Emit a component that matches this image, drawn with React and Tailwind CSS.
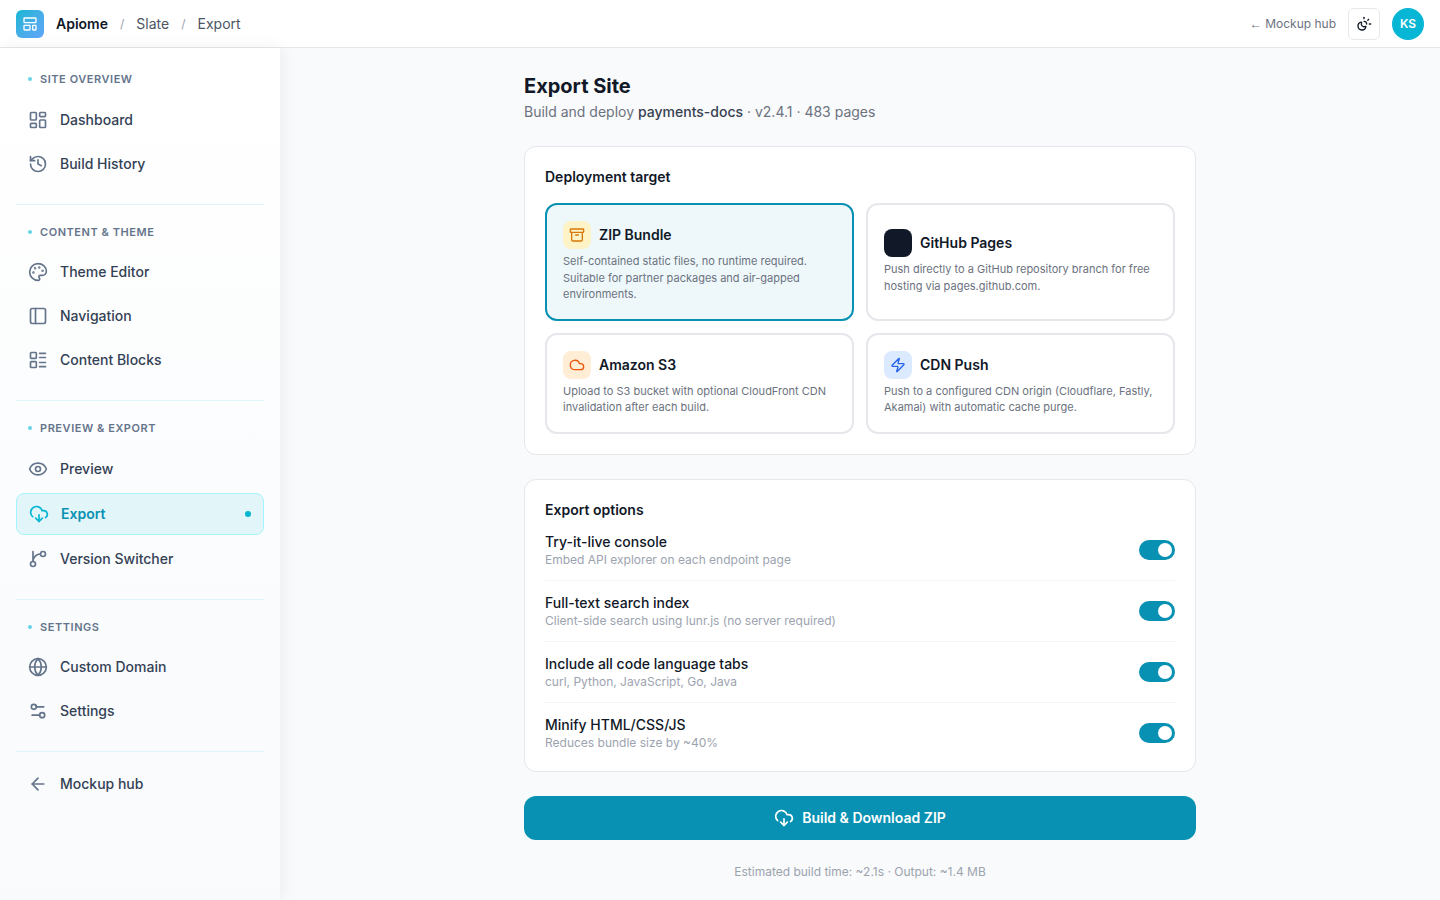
import React, { useState } from 'react';
import {
  Archive,
  ArrowLeft,
  Cloud,
  CloudDownload,
  Eye,
  Globe,
  History,
  LayoutDashboard,
  LayoutList,
  LayoutTemplate,
  Palette,
  PanelLeft,
  Settings2,
  SunMoon,
  Zap
} from 'lucide-react';

// Branch icon with the curve joining above the lower node
const BranchIcon = ({ size = 24, className }) => (
  <svg
    width={size}
    height={size}
    viewBox="0 0 24 24"
    fill="none"
    stroke="currentColor"
    strokeWidth="2"
    strokeLinecap="round"
    strokeLinejoin="round"
    aria-hidden="true"
    className={className}
  >
    <path d="M15 6a9 9 0 0 0-9 9V3" />
    <circle cx="18" cy="6" r="3" />
    <circle cx="6" cy="18" r="3" />
  </svg>
);

const navSections = [
  {
    title: 'Site Overview',
    items: [
      { label: 'Dashboard', icon: LayoutDashboard },
      { label: 'Build History', icon: History }
    ]
  },
  {
    title: 'Content & Theme',
    items: [
      { label: 'Theme Editor', icon: Palette },
      { label: 'Navigation', icon: PanelLeft },
      { label: 'Content Blocks', icon: LayoutList }
    ]
  },
  {
    title: 'Preview & Export',
    items: [
      { label: 'Preview', icon: Eye },
      { label: 'Export', icon: CloudDownload, active: true },
      { label: 'Version Switcher', icon: BranchIcon }
    ]
  },
  {
    title: 'Settings',
    items: [
      { label: 'Custom Domain', icon: Globe },
      { label: 'Settings', icon: Settings2 }
    ]
  }
];

const targets = [
  {
    id: 'zip',
    name: 'ZIP Bundle',
    icon: Archive,
    badge: 'bg-[#fef3c7] text-[#d97706]',
    description: 'Self-contained static files, no runtime required. Suitable for partner packages and air-gapped environments.'
  },
  {
    id: 'github',
    name: 'GitHub Pages',
    icon: null,
    badge: 'bg-[#111827] text-white',
    description: 'Push directly to a GitHub repository branch for free hosting via pages.github.com.'
  },
  {
    id: 's3',
    name: 'Amazon S3',
    icon: Cloud,
    badge: 'bg-[#ffedd5] text-[#ea580c]',
    description: 'Upload to S3 bucket with optional CloudFront CDN invalidation after each build.'
  },
  {
    id: 'cdn',
    name: 'CDN Push',
    icon: Zap,
    badge: 'bg-[#dbeafe] text-[#2563eb]',
    description: 'Push to a configured CDN origin (Cloudflare, Fastly, Akamai) with automatic cache purge.'
  }
];

const exportOptions = [
  { id: 'console', name: 'Try-it-live console', hint: 'Embed API explorer on each endpoint page' },
  { id: 'search', name: 'Full-text search index', hint: 'Client-side search using lunr.js (no server required)' },
  { id: 'tabs', name: 'Include all code language tabs', hint: 'curl, Python, JavaScript, Go, Java' },
  { id: 'minify', name: 'Minify HTML/CSS/JS', hint: 'Reduces bundle size by ~40%' }
];

const Header = () => (
  <header className="flex h-12 items-center justify-between border-b border-[#e5e7eb] bg-white px-4">
    <nav className="flex items-center gap-3 text-sm text-[#4b5563]">
      <span className="flex size-7 items-center justify-center rounded-md bg-linear-to-br from-[#06b6d4] to-[#60a5fa] text-white">
        <LayoutTemplate size={16} />
      </span>
      <a href="#" className="font-semibold text-[#111827]">Apiome</a>
      <span className="text-xs text-[#9ca3af]">/</span>
      <a href="#">Slate</a>
      <span className="text-xs text-[#9ca3af]">/</span>
      <span>Export</span>
    </nav>
    <div className="flex items-center gap-3">
      <a href="#" className="text-xs text-[#6b7280]">
        <span className="font-['Liberation_Sans',sans-serif]">←</span> Mockup hub
      </a>
      <button
        type="button"
        aria-label="Toggle theme"
        className="flex size-8 items-center justify-center rounded-md border border-[#e5e7eb] text-[#111827]"
      >
        <SunMoon size={16} />
      </button>
      <span className="flex size-8 items-center justify-center rounded-full bg-[#06b6d4] text-xs font-semibold text-white">
        KS
      </span>
    </div>
  </header>
);

const NavItem = ({ item }) => {
  const Icon = item.icon;

  if (item.active) {
    return (
      <a
        href="#"
        aria-current="page"
        className="flex items-center gap-3 rounded-lg border border-[#a5f3fc] bg-[#e2f5f9] px-3 py-2.5 text-sm font-semibold text-[#0891b2]"
      >
        <Icon size={20} className="text-[#06b6d4]" />
        {item.label}
        <span className="ml-auto size-1.5 rounded-full bg-[#06b6d4]" />
      </a>
    );
  }

  return (
    <a href="#" className="flex items-center gap-3 rounded-lg px-3 py-2.5 text-sm font-medium text-[#334155]">
      <Icon size={20} className="text-[#64748b]" />
      {item.label}
    </a>
  );
};

const Sidebar = () => (
  <aside className="w-70 shrink-0 bg-linear-to-b from-white to-[#f8fafc] px-4 pt-1 shadow-[2px_0_16px_rgba(15,23,42,0.06)]">
    {navSections.map((section) => (
      <section key={section.title} className="border-[#e0f5fa] pt-[19px] pb-5 not-first:border-t">
        <h2 className="flex items-center gap-2 px-3 pb-3 text-[11px] leading-normal font-semibold tracking-wider text-[#64748b] uppercase">
          <span className="size-1 rounded-full bg-[#67d4e6]" />
          {section.title}
        </h2>
        <div className="flex flex-col gap-1">
          {section.items.map((item) => (
            <NavItem key={item.label} item={item} />
          ))}
        </div>
      </section>
    ))}
    <div className="border-t border-[#e0f5fa] pt-3">
      <NavItem item={{ label: 'Mockup hub', icon: ArrowLeft }} />
    </div>
  </aside>
);

const TargetCard = ({ target, selected, onSelect }) => {
  const Icon = target.icon;

  return (
    <button
      type="button"
      aria-pressed={selected}
      onClick={onSelect}
      className={`rounded-xl border-2 p-4 text-left ${selected ? 'border-[#0891b2] bg-[#eef8fa]' : 'border-[#e5e7eb] bg-white'}`}
    >
      <span className="mb-1 flex items-center gap-2">
        <span className={`flex size-7 items-center justify-center rounded-lg ${target.badge}`}>
          {Icon && <Icon size={16} />}
        </span>
        <span className="text-sm font-semibold text-[#111827]">{target.name}</span>
      </span>
      <span className="block text-[11px] leading-normal text-[#6b7280]">{target.description}</span>
    </button>
  );
};

const OptionRow = ({ option, checked, onChange }) => (
  <label
    htmlFor={option.id}
    className="flex items-center justify-between border-b border-[#f3f4f6] py-3 last:border-b-0 last:pb-0"
  >
    <span>
      <span className="block text-sm font-medium text-[#111827]">{option.name}</span>
      <span className="block text-xs text-[#9ca3af]">{option.hint}</span>
    </span>
    <input id={option.id} type="checkbox" checked={checked} onChange={onChange} className="peer sr-only" />
    <span className="flex h-5 w-9 items-center rounded-full bg-[#d1d5db] px-[3px] peer-checked:justify-end peer-checked:bg-[#0891b2]">
      <span className="size-3.5 rounded-full bg-white" />
    </span>
  </label>
);

const App = () => {
  const [target, setTarget] = useState('zip');
  const [options, setOptions] = useState({
    console: true,
    search: true,
    tabs: true,
    minify: true
  });

  const toggleOption = (id) => {
    setOptions(prev => ({ ...prev, [id]: !prev[id] }));
  };

  return (
    <div className="flex min-h-screen flex-col bg-[#f9fafb] font-[Inter,sans-serif]">
      <Header />
      <div className="flex flex-1">
        <Sidebar />
        <main className="flex-1 px-6 pt-6 pb-5">
          <div className="mx-auto max-w-2xl">
            <h1 className="text-xl font-bold text-[#111827]">Export Site</h1>
            <p className="mt-0.5 text-sm text-[#6b7280]">
              Build and deploy <strong className="font-medium text-[#374151]">payments-docs</strong> · v2.4.1 · 483 pages
            </p>

            <section className="mt-6 rounded-xl border border-[#e5e7eb] bg-white p-5">
              <h2 className="mb-4 text-sm font-semibold text-[#111827]">Deployment target</h2>
              <div className="grid grid-cols-2 gap-3">
                {targets.map((item) => (
                  <TargetCard
                    key={item.id}
                    target={item}
                    selected={item.id === target}
                    onSelect={() => setTarget(item.id)}
                  />
                ))}
              </div>
            </section>

            <section className="mt-6 rounded-xl border border-[#e5e7eb] bg-white p-5">
              <h2 className="text-sm font-semibold text-[#111827]">Export options</h2>
              <div>
                {exportOptions.map((option) => (
                  <OptionRow
                    key={option.id}
                    option={option}
                    checked={options[option.id]}
                    onChange={() => toggleOption(option.id)}
                  />
                ))}
              </div>
            </section>

            <button
              type="button"
              className="mt-6 flex w-full items-center justify-center gap-2 rounded-xl bg-[#0891b2] py-3 text-sm font-semibold text-white"
            >
              <CloudDownload size={20} />
              Build &amp; Download ZIP
            </button>
            <p className="mt-6 text-center text-xs text-[#9ca3af]">Estimated build time: ~2.1s · Output: ~1.4 MB</p>
          </div>
        </main>
      </div>
    </div>
  );
};

export default App;
